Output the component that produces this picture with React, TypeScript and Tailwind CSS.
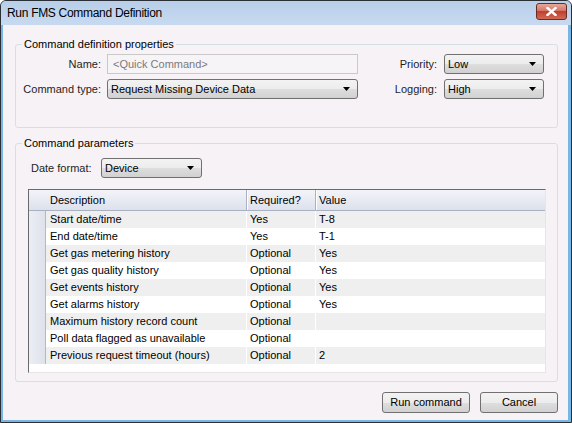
import React from 'react'

const font = "font-['Liberation_Sans',Arial,sans-serif]"

const rows = [
  ['Start date/time', 'Yes', 'T-8'],
  ['End date/time', 'Yes', 'T-1'],
  ['Get gas metering history', 'Optional', 'Yes'],
  ['Get gas quality history', 'Optional', 'Yes'],
  ['Get events history', 'Optional', 'Yes'],
  ['Get alarms history', 'Optional', 'Yes'],
  ['Maximum history record count', 'Optional', ''],
  ['Poll data flagged as unavailable', 'Optional', ''],
  ['Previous request timeout (hours)', 'Optional', '2'],
]

const Arrow = () => (
  <svg width="7" height="4" viewBox="0 0 7 4" className="shrink-0">
    <path d="M0 0h7L3.5 4z" fill="#000" />
  </svg>
)

const Combo = ({ value, className = '' }: { value: string; className?: string }) => (
  <div
    className={`flex h-[20px] shrink-0 items-center rounded-[3px] border border-[#707070] bg-[linear-gradient(#f3f3f3,#ececec_50%,#dedede_50%,#d1d1d1)] pl-[3px] pr-[7px] ${className}`}
  >
    <span className="flex-1 truncate whitespace-nowrap">{value}</span>
    <Arrow />
  </div>
)

const Button = ({ children, className = '' }: { children: React.ReactNode; className?: string }) => (
  <button
    className={`flex h-[21px] items-center justify-center rounded-[3px] border border-[#707070] bg-[linear-gradient(#f3f3f3,#ececec_50%,#dedede_50%,#d1d1d1)] text-[11px] text-black ${className}`}
  >
    {children}
  </button>
)

const Group = ({ title, children }: { title: string; children: React.ReactNode }) => (
  <fieldset className="rounded-[3px] border border-[#d5dfe5]">
    <legend className="ml-[6px] px-[2px] text-[11px] leading-[14px] text-black">{title}</legend>
    {children}
  </fieldset>
)

const App = () => {
  return (
    <div className={`flex h-[423px] w-[572px] flex-col overflow-hidden rounded-t-[6px] border border-[#2a2f36] bg-[#78b7e3] text-[11px] text-black ${font}`}>
      {/* title bar */}
      <div className="flex h-[24px] shrink-0 items-center justify-between bg-linear-to-b from-[#b8cfe9] to-[#c7daf0] pl-[6px] pr-[4px]">
        <span className="text-[12px] tracking-[-0.3px] text-black">Run FMS Command Definition</span>
        <div className="mb-[3px] flex h-[17px] w-[31px] items-center justify-center rounded-[3px] border border-[#6b2b25] bg-[linear-gradient(#e8a89b,#d1705f_50%,#c0402f_50%,#cf6a55)]">
          <svg width="11" height="9" viewBox="0 0 11 9">
            <path d="M1.5 1l8 7M9.5 1l-8 7" stroke="#fff" strokeWidth="2.4" strokeLinecap="square" />
          </svg>
        </div>
      </div>

      {/* client area */}
      <div className="mb-[2px] ml-[2px] mr-[3px] flex flex-1 flex-col bg-[#f6f2f6] pb-[6px] pl-[12px] pr-[10px] pt-[12px]">
        <Group title="Command definition properties">
          <div className="flex flex-col gap-[5px] pb-[28px] pl-[7px] pr-[13px] pt-[3px]">
            <div className="flex h-[20px] items-center">
              <span className="w-[78px] shrink-0 whitespace-nowrap text-right text-[#1e1e1e]">Name:</span>
              <div className="ml-[6px] flex h-[20px] w-[251px] shrink-0 items-center border border-[#c9c9c9] bg-[#f7f4f7] pl-[5px] text-[#7a7a7a]">
                &lt;Quick Command&gt;
              </div>
              <span className="flex-1 whitespace-nowrap pr-[7px] text-right text-[#1e1e1e]">Priority:</span>
              <Combo value="Low" className="w-[100px]" />
            </div>
            <div className="flex h-[20px] items-center">
              <span className="w-[78px] shrink-0 whitespace-nowrap text-right text-[#1e1e1e]">Command type:</span>
              <Combo value="Request Missing Device Data" className="ml-[6px] w-[251px]" />
              <span className="flex-1 whitespace-nowrap pr-[7px] text-right text-[#1e1e1e]">Logging:</span>
              <Combo value="High" className="w-[100px]" />
            </div>
          </div>
        </Group>

        <div className="mt-[8px]">
          <Group title="Command parameters">
            <div className="flex flex-col pb-[8px] pl-[12px] pr-[11px] pt-[8px]">
              <div className="ml-[3px] flex h-[20px] items-center">
                <span className="w-[70px] shrink-0 whitespace-nowrap text-[#1e1e1e]">Date format:</span>
                <Combo value="Device" className="w-[101px]" />
              </div>

              {/* grid */}
              <div className="mt-[11px] flex h-[184px] flex-col border-b border-l border-r border-t border-b-[#e6e6e6] border-l-[#6a6a6a] border-r-[#e6e6e6] border-t-[#6a6a6a] bg-white">
                <div className="flex h-[21px] shrink-0 border-b border-[#a9b0c2] bg-linear-to-b from-[#f3f4f9] to-[#dde1ec]">
                  <div className="w-[217px] pl-[21px] leading-[20px]">Description</div>
                  <div className="w-[69px] border-l border-[#a9b0c2] pl-[3px] leading-[20px] shadow-[inset_1px_0_0_#fff]">Required?</div>
                  <div className="flex-1 border-l border-[#a9b0c2] pl-[3px] leading-[20px] shadow-[inset_1px_0_0_#fff]">Value</div>
                </div>
                {rows.map(([d, r, v], i) => (
                  <div key={d} className={`flex h-[17px] shrink-0 leading-[17px] ${i % 2 === 0 ? 'bg-[#efefef]' : 'bg-white'}`}>
                    <div className="w-[17px] shrink-0 border-r border-[#b5b9c6] bg-linear-to-r from-[#eceef4] to-[#dfe2eb]" />
                    <div className="w-[200px] shrink-0 whitespace-nowrap pl-[4px]">{d}</div>
                    <div className="w-[69px] shrink-0 border-l border-white pl-[3px]">{r}</div>
                    <div className="flex-1 border-l border-white pl-[3px]">{v}</div>
                  </div>
                ))}
              </div>
            </div>
          </Group>
        </div>

        <div className="mt-[10px] flex justify-end gap-[10px]">
          <Button className="w-[88px]">Run command</Button>
          <Button className="w-[78px]">Cancel</Button>
        </div>
      </div>
    </div>
  )
}

export default App
